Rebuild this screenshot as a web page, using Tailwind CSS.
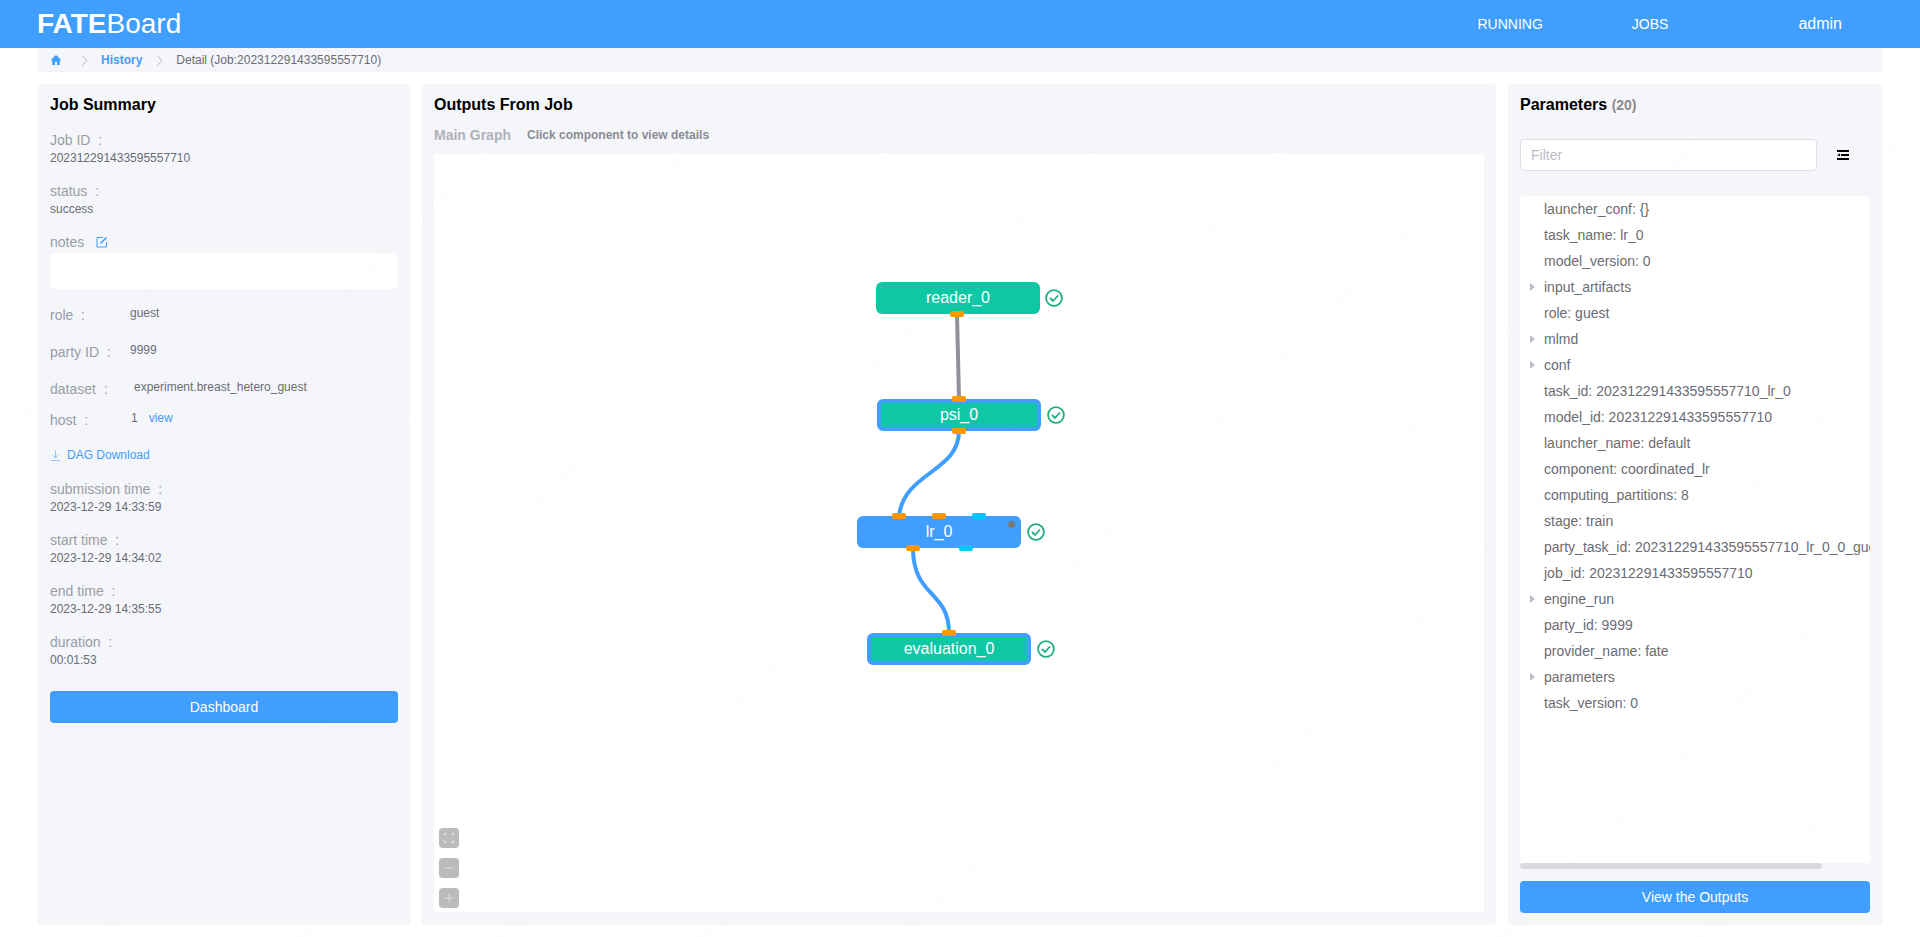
<!DOCTYPE html>
<html lang="en">
<head>
  <meta charset="UTF-8">
  <title>FATEBoard</title>
  <script src="https://cdn.jsdelivr.net/npm/@tailwindcss/browser@4"></script>
</head>
<body class="relative h-[937px] overflow-hidden bg-white font-['Liberation_Sans',Arial,sans-serif] text-[#6a6c75]">
  <!-- Header -->
  <header class="h-12 bg-[#409eff] text-white flex items-center">
    <div class="ml-[37px] text-[28px] leading-none"><b>FATE</b>Board</div>
    <a class="ml-auto text-sm">RUNNING</a>
    <a class="ml-[89px] text-sm">JOBS</a>
    <a class="ml-[130px] mr-[78px] text-base">admin</a>
  </header>

  <!-- Breadcrumb -->
  <div class="mx-[38px] h-6 bg-[#f5f6fa] flex items-center text-xs">
    <svg class="ml-3 w-[12px] h-[12px] text-[#409eff]" viewBox="0 0 24 24" fill="currentColor"><path d="M12 2 1 12.5h3.5V22h5.5v-6.5h4V22h5.500V12.500H23z"/></svg>
    <svg class="ml-[19px] w-[7px] h-[11px] text-[#b4b6bd]" viewBox="0 0 7 11" fill="none" stroke="currentColor"><path d="M1 .5 6 5.500 1 10.500"/></svg>
    <a class="ml-[13px] font-bold text-[#409eff]">History</a>
    <svg class="ml-[14px] w-[7px] h-[11px] text-[#b4b6bd]" viewBox="0 0 7 11" fill="none" stroke="currentColor"><path d="M1 .5 6 5.500 1 10.500"/></svg>
    <span class="ml-[13px]">Detail (Job:202312291433595557710)</span>
  </div>

  <main class="mx-[38px] mt-3 h-[841px] grid grid-cols-[372px_1074px_374px] gap-3">
    <!-- Job Summary -->
    <section class="bg-[#f5f6fa] rounded px-3 relative">
      <h2 class="mt-3 h-[18px] leading-[18px] text-base font-bold text-black">Job Summary</h2>
      <div class="mt-[18px] text-sm leading-4 text-[#9a9ca5]">Job ID &nbsp;:</div>
      <div class="mt-[3px] text-xs leading-[14px]">202312291433595557710</div>

      <div class="mt-[18px] text-sm leading-4 text-[#9a9ca5]">status &nbsp;:</div>
      <div class="mt-[3px] text-xs leading-[14px]">success</div>

      <div class="mt-[18px] flex items-center text-sm leading-4 text-[#9a9ca5]">notes
        <svg class="ml-3 w-3 h-3 text-[#409eff]" viewBox="0 0 12 12" fill="none" stroke="currentColor"><path d="M7 1.500H1V11h9.500V5.500"/><path d="M4.500 7.500 10.500 1.500" stroke-width="1.600"/></svg>
      </div>
      <div class="mt-[3px] h-9 bg-white rounded"></div>

      <div class="mt-[18px] flex h-4 text-sm leading-4 text-[#9a9ca5]">
        <span class="w-[80px]">role &nbsp;:</span><span class="-mt-[2px] text-xs text-[#6a6c75]">guest</span>
      </div>
      <div class="mt-[21px] flex h-4 text-sm leading-4 text-[#9a9ca5]">
        <span class="w-[80px]">party ID &nbsp;:</span><span class="-mt-[2px] text-xs text-[#6a6c75]">9999</span>
      </div>
      <div class="mt-[21px] flex h-4 text-sm leading-4 text-[#9a9ca5]">
        <span class="w-[84px]">dataset &nbsp;:</span><span class="-mt-[2px] text-xs text-[#6a6c75]">experiment.breast_hetero_guest</span>
      </div>
      <div class="mt-[15px] flex h-4 text-sm leading-4 text-[#9a9ca5]">
        <span class="w-[81px]">host &nbsp;:</span><span class="-mt-[2px] text-xs text-[#6a6c75]">1</span><span class="-mt-[2px] ml-[11px] text-xs text-[#409eff]">view</span>
      </div>

      <a class="mt-5 flex items-center h-[14px] text-xs text-[#409eff]">
        <svg class="w-[11px] h-[11px] mr-[6px] text-[#8fc5ff]" viewBox="0 0 11 11" fill="none" stroke="currentColor"><path d="M5.500 .5v7M2.500 5l3 3 3-3M1 10.500h9"/></svg>DAG Download
      </a>

      <div class="mt-[19px] text-sm leading-4 text-[#9a9ca5]">submission time &nbsp;:</div>
      <div class="mt-[3px] text-xs leading-[14px]">2023-12-29 14:33:59</div>
      <div class="mt-[18px] text-sm leading-4 text-[#9a9ca5]">start time &nbsp;:</div>
      <div class="mt-[3px] text-xs leading-[14px]">2023-12-29 14:34:02</div>
      <div class="mt-[18px] text-sm leading-4 text-[#9a9ca5]">end time &nbsp;:</div>
      <div class="mt-[3px] text-xs leading-[14px]">2023-12-29 14:35:55</div>
      <div class="mt-[18px] text-sm leading-4 text-[#9a9ca5]">duration &nbsp;:</div>
      <div class="mt-[3px] text-xs leading-[14px]">00:01:53</div>

      <button class="mt-6 w-full h-8 bg-[#409eff] text-white text-sm rounded">Dashboard</button>
    </section>

    <!-- Outputs -->
    <section class="bg-[#f5f6fa] rounded px-3 flex flex-col">
      <h2 class="mt-3 h-[18px] leading-[18px] text-base font-bold text-black">Outputs From Job</h2>
      <div class="mt-[13px] h-4 flex items-center">
        <span class="text-sm font-bold text-[#b0b1b8]">Main Graph</span>
        <span class="ml-[16px] text-xs font-bold text-[#8a8c94]">Click component to view details</span>
      </div>
      <div class="relative mt-[11px] w-[1050px] h-[758px] bg-white">
        <svg class="absolute inset-0" width="1050" height="758" fill="none" stroke-width="4">
          <path d="M523 160 525 245" stroke="#8f9199"/>
          <path d="M525 277C525 318 470 318 465 362" stroke="#409eff"/>
          <path d="M479 394C479 444 515 436 515 479" stroke="#409eff"/>
        </svg>

        <div class="absolute left-[442px] top-[128px] w-[164px] h-8 rounded-md bg-[#0ec7a5] text-white flex items-center justify-center">reader_0</div>
        <div class="absolute left-[443px] top-[245px] w-[164px] h-8 rounded-md bg-[#0ec7a5] border-4 border-[#409eff] text-white flex items-center justify-center">psi_0</div>
        <div class="absolute left-[423px] top-[362px] w-[164px] h-8 rounded-md bg-[#409eff] text-white flex items-center justify-center">lr_0</div>
        <div class="absolute left-[433px] top-[479px] w-[164px] h-8 rounded-md bg-[#0ec7a5] border-4 border-[#409eff] text-white flex items-center justify-center">evaluation_0</div>

        <!-- ports -->
        <i class="absolute left-[516px] top-[157px] w-[14px] h-[6px] rounded-[2px] bg-[#ff9800]"></i>
        <i class="absolute left-[518px] top-[242px] w-[14px] h-[6px] rounded-[2px] bg-[#ff9800]"></i>
        <i class="absolute left-[518px] top-[274px] w-[14px] h-[6px] rounded-[2px] bg-[#ff9800]"></i>
        <i class="absolute left-[458px] top-[359px] w-[14px] h-[6px] rounded-[2px] bg-[#ff9800]"></i>
        <i class="absolute left-[498px] top-[359px] w-[14px] h-[6px] rounded-[2px] bg-[#ff9800]"></i>
        <i class="absolute left-[538px] top-[359px] w-[14px] h-[6px] rounded-[2px] bg-[#00c8ff]"></i>
        <i class="absolute left-[472px] top-[391px] w-[14px] h-[6px] rounded-[2px] bg-[#ff9800]"></i>
        <i class="absolute left-[525px] top-[391px] w-[14px] h-[6px] rounded-[2px] bg-[#00c8ff]"></i>
        <i class="absolute left-[508px] top-[476px] w-[14px] h-[6px] rounded-[2px] bg-[#ff9800]"></i>
        <i class="absolute left-[574px] top-[367px] w-[7px] h-[7px] rounded-full bg-[#7a7a7a]"></i>

        <!-- status checks -->
        <svg class="absolute left-[611px] top-[135px] w-[18px] h-[18px] text-[#1fae84]" viewBox="0 0 18 18" fill="none" stroke="currentColor" stroke-width="1.800"><circle cx="9" cy="9" r="7.900"/><path d="M5 9 8 12 13 6.500"/></svg>
        <svg class="absolute left-[613px] top-[252px] w-[18px] h-[18px] text-[#1fae84]" viewBox="0 0 18 18" fill="none" stroke="currentColor" stroke-width="1.800"><circle cx="9" cy="9" r="7.900"/><path d="M5 9 8 12 13 6.500"/></svg>
        <svg class="absolute left-[593px] top-[369px] w-[18px] h-[18px] text-[#1fae84]" viewBox="0 0 18 18" fill="none" stroke="currentColor" stroke-width="1.800"><circle cx="9" cy="9" r="7.900"/><path d="M5 9 8 12 13 6.500"/></svg>
        <svg class="absolute left-[603px] top-[486px] w-[18px] h-[18px] text-[#1fae84]" viewBox="0 0 18 18" fill="none" stroke="currentColor" stroke-width="1.800"><circle cx="9" cy="9" r="7.900"/><path d="M5 9 8 12 13 6.500"/></svg>

        <!-- zoom controls -->
        <div class="absolute left-[5px] top-[674px] flex flex-col gap-[10px]">
          <div class="w-5 h-5 rounded bg-[#bbbbbb] flex items-center justify-center">
            <svg class="w-[10px] h-[10px] text-[#e4e4e4]" viewBox="0 0 10 10" fill="none" stroke="currentColor"><path d="M.5 3V.5H3M7 .5h2.500V3M9.500 7v2.500H7M3 9.500H.5V7"/></svg>
          </div>
          <div class="w-5 h-5 rounded bg-[#bbbbbb] flex items-center justify-center">
            <svg class="w-[10px] h-[10px] text-[#d4d4d4]" viewBox="0 0 10 10" fill="none" stroke="currentColor" stroke-width="1.500"><path d="M1 5h8"/></svg>
          </div>
          <div class="w-5 h-5 rounded bg-[#bbbbbb] flex items-center justify-center">
            <svg class="w-[10px] h-[10px] text-[#d4d4d4]" viewBox="0 0 10 10" fill="none" stroke="currentColor" stroke-width="1.500"><path d="M1 5h8M5 1v8"/></svg>
          </div>
        </div>
      </div>
    </section>

    <!-- Parameters -->
    <section class="bg-[#f5f6fa] rounded px-3 flex flex-col">
      <h2 class="mt-[11px] h-[18px] leading-[18px] text-base font-bold text-black">Parameters <span class="text-sm text-[#6a6c75]/80">(20)</span></h2>
      <div class="mt-[26px] flex items-center">
        <div class="w-[297px] h-8 bg-white border border-[#dcdfe6] rounded px-[10px] flex items-center text-sm text-[#bbbbc8]">Filter</div>
        <svg class="ml-5 w-3 h-[10px] text-black" viewBox="0 0 12 10" fill="currentColor"><path d="M0 0h12v2H0zM4 4h8v2H4zM0 8h12v2H0zM3 3.500v3L0 5z"/></svg>
      </div>
      <div class="mt-[25px] w-[350px] h-[673px] bg-white rounded-t flex flex-col overflow-hidden">
        <div class="flex-1 text-sm leading-[26px] text-[#6a6c75] whitespace-nowrap overflow-hidden">
          <div class="pl-6">launcher_conf: {}</div>
          <div class="pl-6">task_name: lr_0</div>
          <div class="pl-6">model_version: 0</div>
          <div class="pl-[10px] flex items-center"><i class="w-0 h-0 border-y-[4px] border-y-transparent border-l-[5px] border-l-[#bbbbc8] mr-[9px]"></i>input_artifacts</div>
          <div class="pl-6">role: guest</div>
          <div class="pl-[10px] flex items-center"><i class="w-0 h-0 border-y-[4px] border-y-transparent border-l-[5px] border-l-[#bbbbc8] mr-[9px]"></i>mlmd</div>
          <div class="pl-[10px] flex items-center"><i class="w-0 h-0 border-y-[4px] border-y-transparent border-l-[5px] border-l-[#bbbbc8] mr-[9px]"></i>conf</div>
          <div class="pl-6">task_id: 202312291433595557710_lr_0</div>
          <div class="pl-6">model_id: 202312291433595557710</div>
          <div class="pl-6">launcher_name: default</div>
          <div class="pl-6">component: coordinated_lr</div>
          <div class="pl-6">computing_partitions: 8</div>
          <div class="pl-6">stage: train</div>
          <div class="pl-6">party_task_id: 202312291433595557710_lr_0_0_guest</div>
          <div class="pl-6">job_id: 202312291433595557710</div>
          <div class="pl-[10px] flex items-center"><i class="w-0 h-0 border-y-[4px] border-y-transparent border-l-[5px] border-l-[#bbbbc8] mr-[9px]"></i>engine_run</div>
          <div class="pl-6">party_id: 9999</div>
          <div class="pl-6">provider_name: fate</div>
          <div class="pl-[10px] flex items-center"><i class="w-0 h-0 border-y-[4px] border-y-transparent border-l-[5px] border-l-[#bbbbc8] mr-[9px]"></i>parameters</div>
          <div class="pl-6">task_version: 0</div>
        </div>
        <div class="h-[6px] bg-[#f5f6fa]"><div class="w-[302px] h-[6px] rounded-full bg-[#d9dadf]"></div></div>
      </div>
      <button class="mt-3 h-8 bg-[#409eff] text-white text-sm rounded">View the Outputs</button>
    </section>
  </main>

  <!-- faint user watermark over the whole page -->
  <svg class="absolute inset-0 pointer-events-none" width="1920" height="937">
    <defs>
      <pattern id="wm" patternUnits="userSpaceOnUse" width="335" height="141.4" patternTransform="translate(1269 349) rotate(-45)">
        <text x="0" y="20" font-size="14" textLength="253" fill="#000" fill-opacity="0.008">ARVINHUANGKF1. 2023-12-29</text>
      </pattern>
    </defs>
    <rect width="1920" height="937" fill="url(#wm)"/>
  </svg>
</body>
</html>
